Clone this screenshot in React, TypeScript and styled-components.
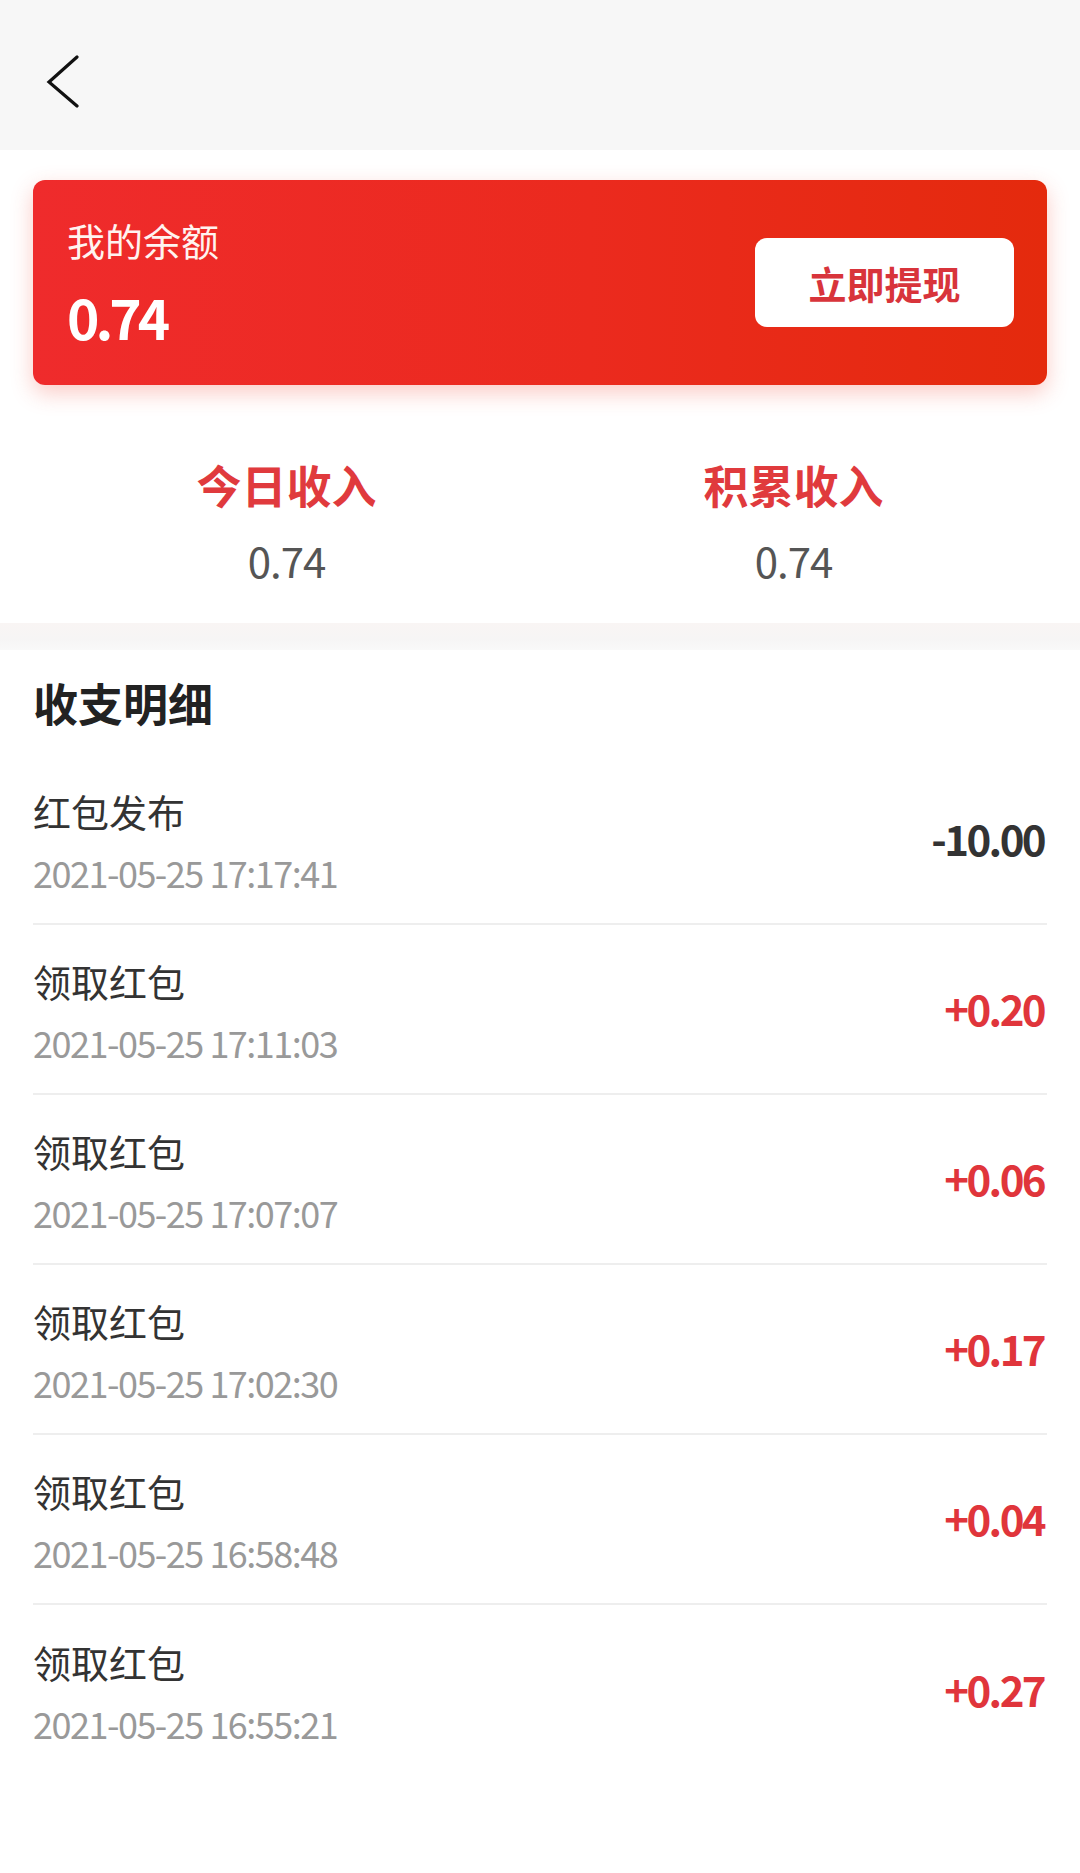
import React from "react";
import styled, { createGlobalStyle } from "styled-components";

const GlobalStyle = createGlobalStyle`
  html, body {
    margin: 0;
    padding: 0;
    background: #ffffff;
    font-family: "Noto Sans CJK SC", "Noto Sans", sans-serif;
  }
  * { box-sizing: border-box; }
`;

const Page = styled.div`
  width: 1080px;
  min-height: 1873px;
  background: #ffffff;
`;

const Header = styled.header`
  height: 150px;
  background: #f7f7f7;
  padding: 55px 0 0 46px;
  display: flex;
  align-items: flex-start;
`;

const BackButton = styled.button`
  border: none;
  background: transparent;
  padding: 0;
  width: 34px;
  height: 54px;
  display: flex;
  cursor: pointer;
`;

const CardWrap = styled.div`
  padding: 30px 33px 0;
`;

const BalanceCard = styled.div`
  height: 205px;
  border-radius: 12px;
  background: linear-gradient(90deg, #ef2b2c 0%, #eb2a1e 55%, #e42a0d 100%);
  box-shadow: 0 8px 22px rgba(240, 70, 50, 0.28);
  display: flex;
  align-items: center;
  justify-content: space-between;
  padding: 0 33px 0 34px;
`;

const BalanceInfo = styled.div`
  display: flex;
  flex-direction: column;
  gap: 29px;
  color: #ffffff;
`;

const BalanceLabel = styled.div`
  font-size: 38px;
  line-height: 38px;
  color: #fff3f0;
`;

const BalanceAmount = styled.div`
  font-size: 55px;
  line-height: 56px;
  font-weight: 700;
  letter-spacing: -4px;
`;

const WithdrawButton = styled.button`
  width: 259px;
  height: 89px;
  border: none;
  border-radius: 12px;
  background: #ffffff;
  color: #d8343b;
  font-family: inherit;
  font-size: 38px;
  font-weight: 700;
  cursor: pointer;
`;

const Stats = styled.div`
  display: grid;
  grid-template-columns: 1fr 1fr;
  padding: 77px 33px 42px;
`;

const StatCol = styled.div`
  display: flex;
  flex-direction: column;
  align-items: center;
  gap: 32px;
`;

const StatTitle = styled.div`
  font-size: 45px;
  line-height: 45px;
  font-weight: 700;
  color: #e03a3d;
`;

const StatValue = styled.div`
  font-size: 42px;
  line-height: 42px;
  color: #555555;
  letter-spacing: -1px;
`;

const Divider = styled.div`
  height: 27px;
  background: linear-gradient(180deg, #f9f5f4 0%, #f6f5f5 60%, #f9f9f9 100%);
`;

const ListSection = styled.section`
  padding: 30px 33px 0;
`;

const SectionTitle = styled.h2`
  margin: 0 0 30px;
  font-size: 45px;
  line-height: 45px;
  font-weight: 700;
  color: #222222;
`;

const Row = styled.div<{ $last?: boolean }>`
  height: 170px;
  display: flex;
  align-items: center;
  justify-content: space-between;
  border-bottom: ${(p) => (p.$last ? "none" : "2px solid #eeeeee")};
  padding-top: 4px;
`;

const RowInfo = styled.div`
  display: flex;
  flex-direction: column;
  gap: 24px;
`;

const RowTitle = styled.div`
  font-size: 38px;
  line-height: 38px;
  color: #333333;
`;

const RowDate = styled.div`
  font-size: 36px;
  line-height: 36px;
  color: #999999;
  letter-spacing: -1.5px;
`;

const RowAmount = styled.div<{ $positive: boolean }>`
  font-size: 42px;
  line-height: 42px;
  font-weight: 700;
  letter-spacing: -2.6px;
  padding-right: 3px;
  color: ${(p) => (p.$positive ? "#e0353b" : "#333333")};
  margin-top: -6px;
`;

const records = [
  { title: "红包发布", date: "2021-05-25 17:17:41", amount: "-10.00" },
  { title: "领取红包", date: "2021-05-25 17:11:03", amount: "+0.20" },
  { title: "领取红包", date: "2021-05-25 17:07:07", amount: "+0.06" },
  { title: "领取红包", date: "2021-05-25 17:02:30", amount: "+0.17" },
  { title: "领取红包", date: "2021-05-25 16:58:48", amount: "+0.04" },
  { title: "领取红包", date: "2021-05-25 16:55:21", amount: "+0.27" },
];

export default function App() {
  return (
    <Page>
      <GlobalStyle />
      <Header>
        <BackButton aria-label="返回">
          <svg width="34" height="54" viewBox="0 0 34 54">
            <polyline
              points="31,2 3,27 31,51"
              fill="none"
              stroke="#111111"
              strokeWidth="3.2"
              strokeLinecap="round"
              strokeLinejoin="miter"
            />
          </svg>
        </BackButton>
      </Header>
      <CardWrap>
        <BalanceCard>
          <BalanceInfo>
            <BalanceLabel>我的余额</BalanceLabel>
            <BalanceAmount>0.74</BalanceAmount>
          </BalanceInfo>
          <WithdrawButton>立即提现</WithdrawButton>
        </BalanceCard>
      </CardWrap>
      <Stats>
        <StatCol>
          <StatTitle>今日收入</StatTitle>
          <StatValue>0.74</StatValue>
        </StatCol>
        <StatCol>
          <StatTitle>积累收入</StatTitle>
          <StatValue>0.74</StatValue>
        </StatCol>
      </Stats>
      <Divider />
      <ListSection>
        <SectionTitle>收支明细</SectionTitle>
        {records.map((r, i) => (
          <Row key={i} $last={i === records.length - 1}>
            <RowInfo>
              <RowTitle>{r.title}</RowTitle>
              <RowDate>{r.date}</RowDate>
            </RowInfo>
            <RowAmount $positive={r.amount.startsWith("+")}>{r.amount}</RowAmount>
          </Row>
        ))}
      </ListSection>
    </Page>
  );
}
